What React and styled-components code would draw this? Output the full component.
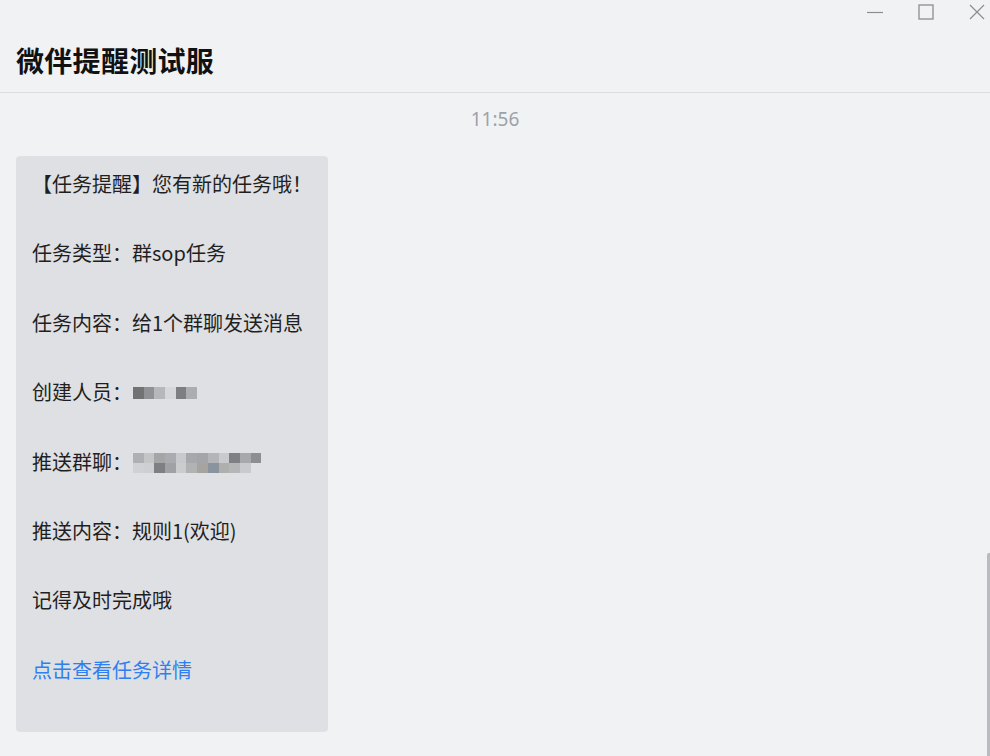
import React from "react";
import styled, { createGlobalStyle } from "styled-components";

const GlobalStyle = createGlobalStyle`
  html, body {
    margin: 0;
    padding: 0;
    background: #f1f2f4;
  }
  body {
    font-family: "Noto Sans CJK SC", "Noto Sans", sans-serif;
    overflow: hidden;
  }
`;

const Page = styled.div`
  position: relative;
  width: 990px;
  height: 756px;
  background: #f1f2f4;
  overflow: hidden;
`;

const Header = styled.header`
  display: flex;
  flex-direction: column;
  height: 92px;
  padding: 0 5px 0 16px;
  border-bottom: 1px solid #dcdde0;
  box-sizing: content-box;
`;

const Controls = styled.div`
  display: flex;
  justify-content: flex-end;
  align-items: center;
  gap: 35px;
  height: 24px;
`;

const ControlButton = styled.span`
  display: flex;
  width: 16px;
  height: 16px;
  align-items: center;
  justify-content: center;
  color: #8b8e93;
`;

const Title = styled.h1`
  margin: 16px 0 0;
  font-size: 28px;
  line-height: 40px;
  font-weight: 700;
  color: #111;
  letter-spacing: 0.3px;
`;

const Body = styled.main`
  display: flex;
  flex-direction: column;
  align-items: flex-start;
  padding: 0 16px;
`;

const Time = styled.div`
  align-self: center;
  margin: 13px 0 24px;
  font-family: "Noto Sans", "Noto Sans CJK SC", sans-serif;
  font-size: 19px;
  line-height: 26px;
  color: #9ea2a8;
`;

const Bubble = styled.div`
  display: flex;
  flex-direction: column;
  gap: 39.4px;
  width: 312px;
  box-sizing: border-box;
  padding: 13px 16px 47px;
  background: #dfe0e3;
  border-radius: 4px;
`;

const Line = styled.div`
  display: flex;
  align-items: center;
  height: 30px;
  font-size: 20px;
  line-height: 30px;
  color: ${(p) => (p.$link ? "#2e7ff0" : "#1f1f1f")};
  white-space: nowrap;
  cursor: ${(p) => (p.$link ? "pointer" : "default")};
`;

const Mosaic = styled.span`
  display: inline-grid;
  grid-template-columns: repeat(${(p) => p.$cols}, 10.7px);
  grid-auto-rows: ${(p) => p.$rowH}px;
  margin-left: 1px;
  margin-top: 2px;
  filter: blur(0.6px);
`;

const Pixel = styled.span`
  background: ${(p) => p.$c};
`;

const ScrollThumb = styled.div`
  position: absolute;
  right: 0;
  top: 553px;
  bottom: 0;
  width: 3px;
  background: #b9bbbf;
  border-radius: 2px 0 0 0;
`;

const creatorPixels = ["#727274", "#8f9195", "#b6b7ba", "#d6d7da", "#7d7e81", "#abadb0"];

const groupPixels = [
  "#b0b0b2", "#c5c5c7", "#a3a5a7", "#a8abb0", "#c8c9cc", "#a6a8ab",
  "#a3a6a9", "#b3b5b8", "#c9cacb", "#7f8083", "#a7a8ab", "#8d8e90",
  "#d0d1d3", "#cfcfd1", "#7e7f82", "#9fa1a4", "#cbccce", "#b1b2b4",
  "#a6a3a1", "#8a949f", "#afb0ae", "#b5b6b8", "#c9cacd", "#dfe0e3",
];

const MinimizeIcon = () => (
  <svg width="16" height="16" viewBox="0 0 16 16">
    <line x1="0" y1="8.5" x2="16" y2="8.5" stroke="currentColor" strokeWidth="1.2" />
  </svg>
);

const MaximizeIcon = () => (
  <svg width="16" height="16" viewBox="0 0 16 16">
    <rect x="1" y="1" width="14" height="14" fill="none" stroke="currentColor" strokeWidth="1.3" />
  </svg>
);

const CloseIcon = () => (
  <svg width="16" height="16" viewBox="0 0 16 16">
    <path d="M1 1 L15 15 M15 1 L1 15" stroke="currentColor" strokeWidth="1.2" fill="none" />
  </svg>
);

const App = () => {
  return (
    <>
      <GlobalStyle />
      <Page>
        <Header>
          <Controls>
            <ControlButton>
              <MinimizeIcon />
            </ControlButton>
            <ControlButton>
              <MaximizeIcon />
            </ControlButton>
            <ControlButton>
              <CloseIcon />
            </ControlButton>
          </Controls>
          <Title>微伴提醒测试服</Title>
        </Header>
        <Body>
          <Time>11:56</Time>
          <Bubble>
            <Line>【任务提醒】您有新的任务哦！</Line>
            <Line>任务类型：群sop任务</Line>
            <Line>任务内容：给1个群聊发送消息</Line>
            <Line>
              创建人员：
              <Mosaic $cols={6} $rowH={12}>
                {creatorPixels.map((c, i) => (
                  <Pixel key={i} $c={c} />
                ))}
              </Mosaic>
            </Line>
            <Line>
              推送群聊：
              <Mosaic $cols={12} $rowH={10}>
                {groupPixels.map((c, i) => (
                  <Pixel key={i} $c={c} />
                ))}
              </Mosaic>
            </Line>
            <Line>推送内容：规则1(欢迎)</Line>
            <Line>记得及时完成哦</Line>
            <Line $link>点击查看任务详情</Line>
          </Bubble>
        </Body>
        <ScrollThumb />
      </Page>
    </>
  );
};

export default App;
